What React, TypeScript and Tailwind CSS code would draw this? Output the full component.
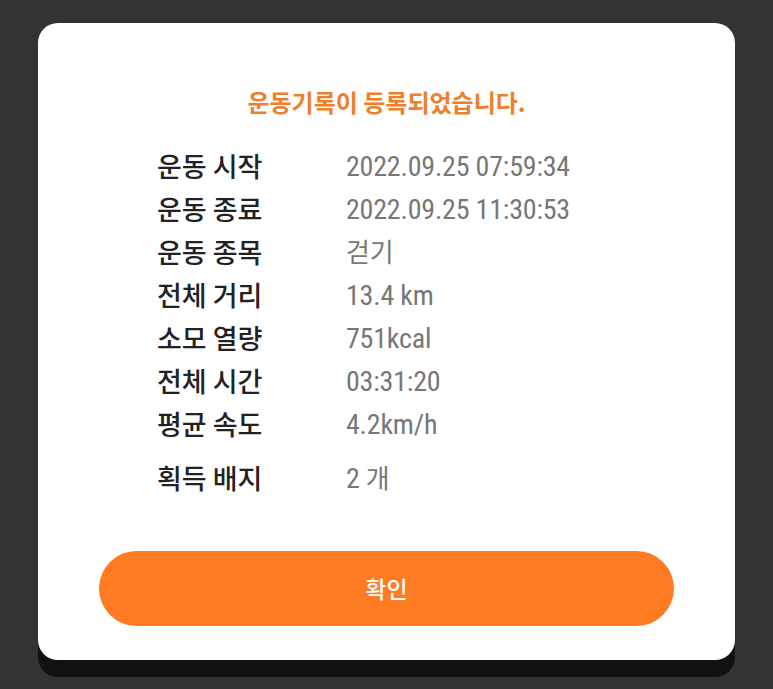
const rows: [string, React.ReactNode][] = [
  ["운동 시작", "2022.09.25 07:59:34"],
  ["운동 종료", "2022.09.25 11:30:53"],
  ["운동 종목", <span className="text-[26px]">걷기</span>],
  ["전체 거리", "13.4 km"],
  ["소모 열량", "751kcal"],
  ["전체 시간", "03:31:20"],
  ["평균 속도", "4.2km/h"],
];

function Row({ label, value }: { label: string; value: React.ReactNode }) {
  return (
    <div className="flex h-[43px] items-center">
      <div className="w-[189px] text-[27px] font-medium text-[#222] [font-family:'Noto_Sans_CJK_KR',sans-serif]">
        {label}
      </div>
      <div className="text-[28px] tracking-[-0.2px] text-[#777] font-stretch-[84%] [font-family:Roboto,'Noto_Sans_CJK_KR',sans-serif]">
        {value}
      </div>
    </div>
  );
}

export default function App() {
  return (
    <div className="min-h-[689px] w-full bg-[#333333] pt-[23px] pl-[38px]">
      <div className="flex w-[697px] flex-col rounded-[20px] bg-white pt-[64px] pb-[34px] shadow-[0_17px_0_#111111]">
        <h1 className="flex h-[30px] items-center justify-center text-[24px] font-bold text-[#f07f2c] [font-family:'Noto_Sans_CJK_KR',sans-serif]">
          운동기록이 등록되었습니다.
        </h1>

        {/* RESULT ROWS */}
        <div className="mt-[28px] pl-[119px]">
          {rows.map(([label, value]) => (
            <Row key={label} label={label} value={value} />
          ))}
          <div className="mt-[11px]">
            <Row
              label="획득 배지"
              value={
                <>
                  2 <span className="text-[26px]">개</span>
                </>
              }
            />
          </div>
        </div>

        <button className="mx-[61px] mt-[51px] h-[75px] rounded-full bg-[#ff7b22] text-[23px] font-medium text-white [font-family:'Noto_Sans_CJK_KR',sans-serif]">
          확인
        </button>
      </div>
    </div>
  );
}
